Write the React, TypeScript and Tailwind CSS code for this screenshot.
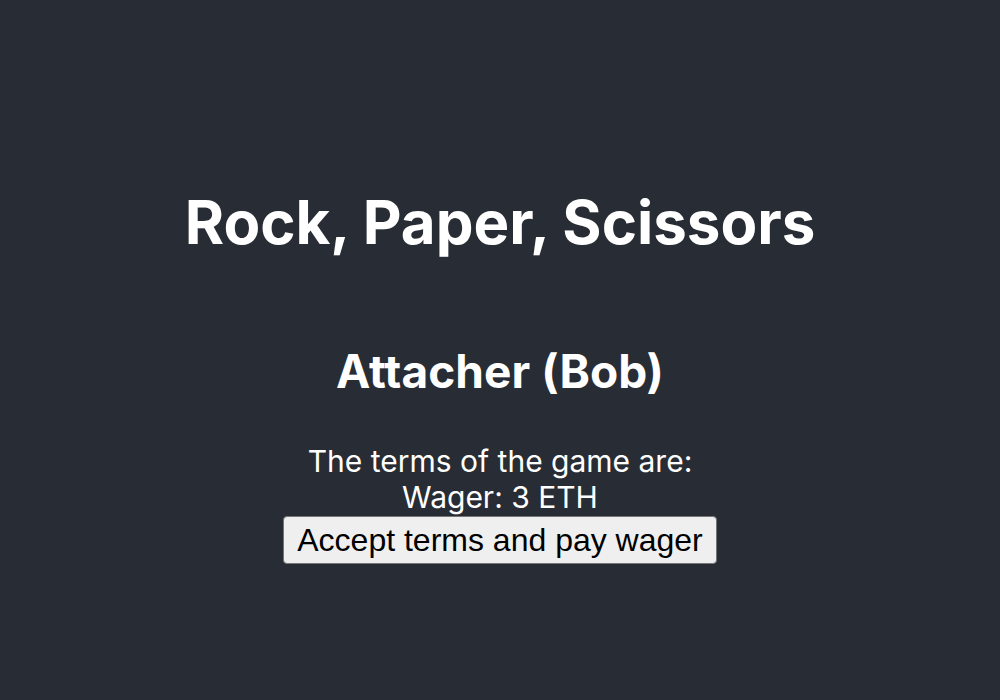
export default function App() {
  return (
    <div className="w-[1000px] h-[700px] bg-[#282c34] text-white flex flex-col items-center font-['Inter','Noto_Sans',sans-serif]">
      <h1 className="mt-[186px] text-[60px] leading-[72px] font-bold">Rock, Paper, Scissors</h1>
      <h2 className="mt-[85px] text-[46px] leading-[56px] font-bold tracking-[0.001em]">{"At\u200Ctacher (Bob)"}</h2>
      <div className="mt-[44px] text-[30px] leading-[36px] flex flex-col items-center">
        <div>The terms of the game are:</div>
        <div>Wager: 3 ETH</div>
        <button className="mt-[1px] w-[434px] h-[48px] bg-[#efefef] text-black border border-[#767676] rounded-[4px] text-[32px] leading-none font-['Liberation_Sans',Arial,sans-serif]">
          Accept terms and pay wager
        </button>
      </div>
    </div>
  );
}
